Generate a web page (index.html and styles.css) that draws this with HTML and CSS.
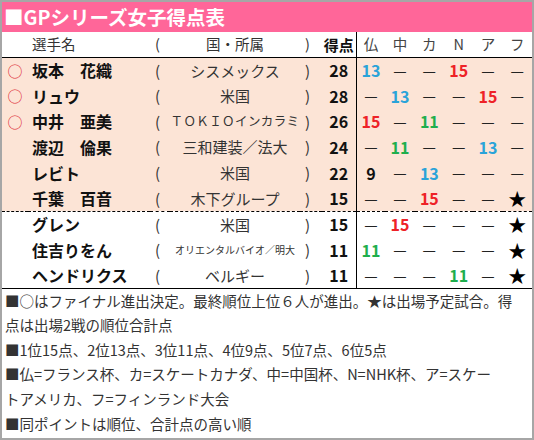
FILE: index.html
```html
<!DOCTYPE html>
<html lang="ja">
<head>
    <meta charset="UTF-8" />
    <meta name="viewport" content="width=device-width, initial-scale=1" />
    <link rel="stylesheet" href="styles.css">
</head>
<body>
    <div class="sheet">
        <div class="title">■GPシリーズ女子得点表</div>
        <table class="score-table">
            <colgroup>
                <col class="w-mark"><col class="w-name"><col class="w-paren"><col class="w-team"><col class="w-paren2"><col class="w-total">
                <col><col><col><col><col><col>
            </colgroup>
            <tr class="head">
                <td></td>
                <td class="name-h">選手名</td>
                <td class="paren">(</td>
                <td class="team">国・所属</td>
                <td class="paren">)</td>
                <td class="total">得点</td>
                <td class="ev first">仏</td><td class="ev">中</td><td class="ev">カ</td><td class="ev">N</td><td class="ev">ア</td><td class="ev">フ</td>
            </tr>
            <tr class="pink">
                <td class="mark">○</td><td class="name">坂本　花織</td><td class="paren">(</td><td class="team">シスメックス</td><td class="paren">)</td><td class="total">28</td>
                <td class="ev first blue">13</td><td class="ev">—</td><td class="ev">—</td><td class="ev red">15</td><td class="ev">—</td><td class="ev">—</td>
            </tr>
            <tr class="pink">
                <td class="mark">○</td><td class="name">リュウ</td><td class="paren">(</td><td class="team">米国</td><td class="paren">)</td><td class="total">28</td>
                <td class="ev first">—</td><td class="ev blue">13</td><td class="ev">—</td><td class="ev">—</td><td class="ev red">15</td><td class="ev">—</td>
            </tr>
            <tr class="pink">
                <td class="mark">○</td><td class="name">中井　亜美</td><td class="paren">(</td><td class="team team-wide">ＴＯＫＩＯインカラミ</td><td class="paren">)</td><td class="total">26</td>
                <td class="ev first red">15</td><td class="ev">—</td><td class="ev green">11</td><td class="ev">—</td><td class="ev">—</td><td class="ev">—</td>
            </tr>
            <tr class="pink">
                <td class="mark"></td><td class="name">渡辺　倫果</td><td class="paren">(</td><td class="team">三和建装／法大</td><td class="paren">)</td><td class="total">24</td>
                <td class="ev first">—</td><td class="ev green">11</td><td class="ev">—</td><td class="ev">—</td><td class="ev blue">13</td><td class="ev">—</td>
            </tr>
            <tr class="pink">
                <td class="mark"></td><td class="name">レビト</td><td class="paren">(</td><td class="team">米国</td><td class="paren">)</td><td class="total">22</td>
                <td class="ev first num">9</td><td class="ev">—</td><td class="ev blue">13</td><td class="ev">—</td><td class="ev">—</td><td class="ev">—</td>
            </tr>
            <tr class="pink cut">
                <td class="mark"></td><td class="name">千葉　百音</td><td class="paren">(</td><td class="team">木下グループ</td><td class="paren">)</td><td class="total">15</td>
                <td class="ev first">—</td><td class="ev">—</td><td class="ev red">15</td><td class="ev">—</td><td class="ev">—</td><td class="ev star">★</td>
            </tr>
            <tr>
                <td class="mark"></td><td class="name">グレン</td><td class="paren">(</td><td class="team">米国</td><td class="paren">)</td><td class="total">15</td>
                <td class="ev first">—</td><td class="ev red">15</td><td class="ev">—</td><td class="ev">—</td><td class="ev">—</td><td class="ev star">★</td>
            </tr>
            <tr>
                <td class="mark"></td><td class="name">住吉りをん</td><td class="paren">(</td><td class="team team-small">オリエンタルバイオ／明大</td><td class="paren">)</td><td class="total">11</td>
                <td class="ev first green">11</td><td class="ev">—</td><td class="ev">—</td><td class="ev">—</td><td class="ev">—</td><td class="ev star">★</td>
            </tr>
            <tr class="last">
                <td class="mark"></td><td class="name">ヘンドリクス</td><td class="paren">(</td><td class="team">ベルギー</td><td class="paren">)</td><td class="total">11</td>
                <td class="ev first">—</td><td class="ev">—</td><td class="ev">—</td><td class="ev green">11</td><td class="ev">—</td><td class="ev star">★</td>
            </tr>
        </table>
        <div class="notes">
            <p>■○はファイナル進出決定。最終順位上位６人が進出。★は出場予定試合。得<br>点は出場2戦の順位合計点</p>
            <p>■1位15点、2位13点、3位11点、4位9点、5位7点、6位5点</p>
            <p>■仏=フランス杯、カ=スケートカナダ、中=中国杯、N=NHK杯、ア=スケー<br>トアメリカ、フ=フィンランド大会</p>
            <p>■同ポイントは順位、合計点の高い順</p>
        </div>
    </div>
</body>
</html>
```
FILE: styles.css
```css
* {
    box-sizing: border-box;
    margin: 0;
    padding: 0;
}

body {
    font-family: "Noto Sans CJK JP", "Noto Sans", sans-serif;
    background: #fff;
    color: #333;
}

.sheet {
    width: 534px;
    height: 440px;
    border: 2px solid #a6a6a6;
    overflow: hidden;
}

.title {
    height: 30px;
    background: #ff6699;
    color: #fff;
    font-size: 19.5px;
    font-weight: bold;
    line-height: 30px;
    padding-left: 2px;
    white-space: nowrap;
}

.score-table {
    width: 530px;
    table-layout: fixed;
    border-collapse: collapse;
}

.w-mark { width: 26px; }
.w-name { width: 122px; }
.w-paren { width: 20px; }
.w-team { width: 130px; }
.w-paren2 { width: 22px; }
.w-total { width: 34px; }

.score-table td {
    height: 25.7px;
    padding: 0;
    white-space: nowrap;
    overflow: hidden;
    vertical-align: middle;
    font-size: 15px;
    line-height: 1;
}

.head td {
    height: 25px;
    font-size: 14.5px;
    border-bottom: 1px solid #000;
}

.pink td {
    background: #fce4d6;
}

.cut td {
    border-bottom: 1px dashed #000;
}

.last td {
    border-bottom: 1px solid #000;
}

.mark {
    color: #e0303a;
    text-align: center;
    font-size: 14px;
}

.name {
    padding-left: 4px !important;
    font-size: 16px !important;
    font-weight: bold;
    color: #111;
}

.name-h {
    padding-left: 4px !important;
}

.paren {
    text-align: left;
    padding-left: 5px !important;
}

.team {
    text-align: center;
}

.team-wide {
    font-size: 12.5px !important;
    letter-spacing: 0.4px;
}

.team-small {
    font-size: 10px !important;
}

.total {
    text-align: center;
    font-weight: bold;
    color: #111;
    font-size: 16px !important;
}

.head .total {
    font-size: 15px !important;
}

.ev {
    text-align: center;
    color: #222;
}

.ev.first {
    border-left: 1px solid #000;
}

.head .ev {
    color: #444;
}

.blue, .red, .green, .num {
    font-weight: bold;
    font-size: 16px !important;
}

.num { color: #111; }
.blue { color: #2aa3d9 !important; }
.red { color: #ee2227 !important; }
.green { color: #1fae4d !important; }

.star {
    color: #000 !important;
    font-size: 18px !important;
}

.notes {
    padding: 0 3px;
    font-size: 14.5px;
    line-height: 24.6px;
    color: #333;
    white-space: nowrap;
}

.notes p {
    margin: 0;
}
```
